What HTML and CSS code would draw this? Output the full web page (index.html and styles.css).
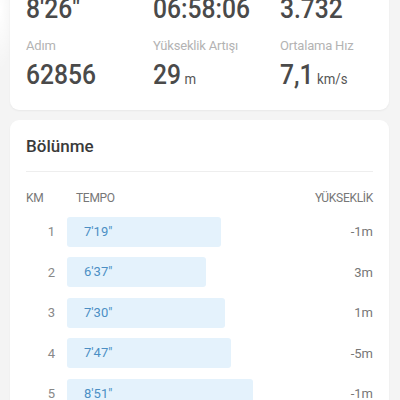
FILE: index.html
```html
<!DOCTYPE html>
<html lang="tr">
<head>
  <meta charset="UTF-8" />
  <meta name="viewport" content="width=device-width, initial-scale=1.0"/>
  <title>Aktivite Detayı</title>
  <link rel="stylesheet" href="styles.css">
</head>
<body>
  <main class="sayfa">
    <section class="kart ozet">
      <div class="ozet-grid">
        <div class="stat">
          <span class="deger">8'26"</span>
        </div>
        <div class="stat">
          <span class="deger">06:58:06</span>
        </div>
        <div class="stat">
          <span class="deger">3.732</span>
        </div>
        <div class="stat">
          <span class="etiket">Adım</span>
          <span class="deger">62856</span>
        </div>
        <div class="stat">
          <span class="etiket">Yükseklik Artışı</span>
          <span class="deger">29<small class="birim">m</small></span>
        </div>
        <div class="stat">
          <span class="etiket">Ortalama Hız</span>
          <span class="deger">7,1<small class="birim">km/s</small></span>
        </div>
      </div>
    </section>

    <section class="kart bolunme">
      <h3>Bölünme</h3>
      <hr />
      <div class="tablo-baslik">
        <span class="km">KM</span>
        <span class="tempo">TEMPO</span>
        <span class="yukseklik">YÜKSEKLİK</span>
      </div>
      <div class="satirlar">
        <div class="satir">
          <span class="km">1</span>
          <div class="cubuk-alan"><div class="cubuk" style="width: 154px">7'19"</div></div>
          <span class="yukseklik">-1m</span>
        </div>
        <div class="satir">
          <span class="km">2</span>
          <div class="cubuk-alan"><div class="cubuk" style="width: 139px">6'37"</div></div>
          <span class="yukseklik">3m</span>
        </div>
        <div class="satir">
          <span class="km">3</span>
          <div class="cubuk-alan"><div class="cubuk" style="width: 158px">7'30"</div></div>
          <span class="yukseklik">1m</span>
        </div>
        <div class="satir">
          <span class="km">4</span>
          <div class="cubuk-alan"><div class="cubuk" style="width: 164px">7'47"</div></div>
          <span class="yukseklik">-5m</span>
        </div>
        <div class="satir">
          <span class="km">5</span>
          <div class="cubuk-alan"><div class="cubuk" style="width: 186px">8'51"</div></div>
          <span class="yukseklik">-1m</span>
        </div>
      </div>
    </section>
  </main>
</body>
</html>
```

FILE: styles.css
```css
body {
  margin: 0;
  font-family: Roboto, 'Noto Sans', sans-serif;
  background-color: #f4f4f4;
  background-image: radial-gradient(ellipse 14px 60px at 0 10px, #ffffff, rgba(255,255,255,0));
  color: #444;
  overflow: hidden;
}

.sayfa {
  padding: 0 11px 0 10px;
  margin-top: -23px;
}

.kart {
  background-color: white;
  border-radius: 9px;
  box-shadow: 0 1px 2px rgba(0, 0, 0, 0.05);
  padding: 16px 16px;
}

/* Özet kartı */
.ozet {
  padding-bottom: 19px;
}

.ozet-grid {
  display: grid;
  grid-template-columns: 127px 127px 1fr;
  row-gap: 12px;
}

.stat {
  display: flex;
  flex-direction: column;
  gap: 4px;
}

.etiket {
  font-size: 13px;
  line-height: 18px;
  color: #b3b3b3;
  letter-spacing: -0.2px;
}

/* rakamlar telefondaki dar fonta benzesin diye */
.deger {
  font-size: 28px;
  line-height: 32px;
  font-weight: 500;
  color: #4a4a4a;
  transform: scaleX(0.88);
  transform-origin: left center;
  white-space: nowrap;
}

.birim {
  font-size: 15px;
  line-height: 1;
  font-weight: 400;
  margin-left: 4px;
  color: #555;
}

/* Bölünme kartı */
.bolunme {
  margin-top: 10px;
  padding-top: 14px;
}

.bolunme h3 {
  margin: 0;
  font-size: 17px;
  line-height: 24px;
  font-weight: 500;
  color: #3a3a3a;
}

.bolunme hr {
  border: none;
  border-top: 1px solid #eeeeee;
  margin: 13px 0 18px;
}

.tablo-baslik {
  display: flex;
  font-size: 12px;
  line-height: 16px;
  color: #777;
  letter-spacing: -0.3px;
}

.tablo-baslik .km {
  width: 50px;
}

.tablo-baslik .tempo {
  flex: 1;
}

.satirlar {
  display: flex;
  flex-direction: column;
  gap: 10.5px;
  margin-top: 10.5px;
}

.satir {
  display: flex;
  align-items: center;
  height: 30px;
  font-size: 13px;
}

.satir .km {
  width: 29px;
  padding-right: 12px;
  text-align: right;
  color: #888;
}

.cubuk-alan {
  flex: 1;
}

.cubuk {
  height: 30px;
  line-height: 30px;
  padding-left: 17px;
  box-sizing: border-box;
  background-color: #e4f2fc;
  border-radius: 3px;
  color: #4b8fc4;
}

.satir .yukseklik {
  color: #777;
  text-align: right;
  width: 60px;
}
```
